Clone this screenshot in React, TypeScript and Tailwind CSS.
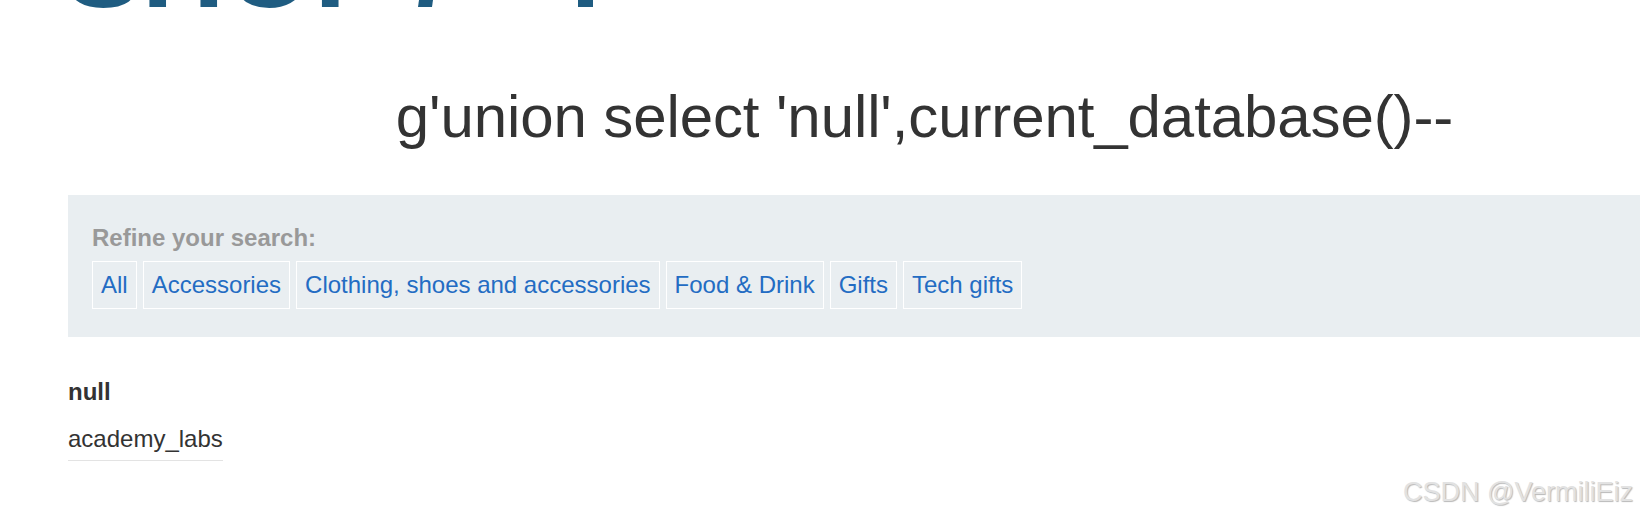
import React from 'react';

const categories = [
  'All',
  'Accessories',
  'Clothing, shoes and accessories',
  'Food & Drink',
  'Gifts',
  'Tech gifts',
];

function ShopBanner() {
  // only the bottom edge of the big banner is visible, the rest scrolled off
  return (
    <div className="-ml-[3px] flex h-[25px] items-end overflow-hidden">
      <span className="text-[115px] font-bold leading-none text-[#1f5c81]">SHOP</span>
      <svg className="ml-[27px] self-start" width="176" height="8" viewBox="0 0 176 8">
        <path d="M1 0h14l-1 7H0z" fill="#1f5c81" />
        <rect x="160" y="0" width="15" height="7" fill="#1f5c81" />
      </svg>
    </div>
  );
}

export default function App() {
  return (
    <div className="relative h-[520px] w-full overflow-hidden bg-white font-['Liberation_Sans',Arial,sans-serif] text-[#333]">
      <div className="ml-[68px] w-[1709px]">
        <ShopBanner />

        <h1 className="mt-[57px] pl-[4px] text-center text-[60px] font-normal leading-[69px] tracking-[-0.1px] text-[#333]">
          g'union select 'null',current_database()--
        </h1>

        <section className="mt-[44px] bg-[#e9eef1] pb-[28px] pl-[24px] pt-[29px]">
          <div className="text-[24px] font-bold leading-[28px] text-[#999]">Refine your search:</div>
          <div className="mt-[9px] flex gap-[6px]">
            {categories.map((c) => (
              <a
                key={c}
                href="#"
                className="flex h-[48px] items-center border border-white px-[8px] text-[24px] leading-[28px] text-[#236cc3] no-underline"
              >
                {c}
              </a>
            ))}
          </div>
        </section>

        <table className="mt-[41px] border-collapse">
          <tbody>
            <tr>
              <th className="p-0 pb-[19px] text-left text-[24px] font-bold leading-[28px] text-[#333]">null</th>
            </tr>
            <tr>
              <td className="border-b border-[#e3e3e3] p-0 pb-[7px] text-[24px] leading-[28px] text-[#333]">
                academy_labs
              </td>
            </tr>
          </tbody>
        </table>
      </div>

      <div className="absolute right-[7px] top-[479px] text-[27px] leading-none text-[#e2e2e2] [text-shadow:1px_1px_1px_rgba(0,0,0,0.28)]">
        CSDN @VermiliEiz
      </div>
    </div>
  );
}
